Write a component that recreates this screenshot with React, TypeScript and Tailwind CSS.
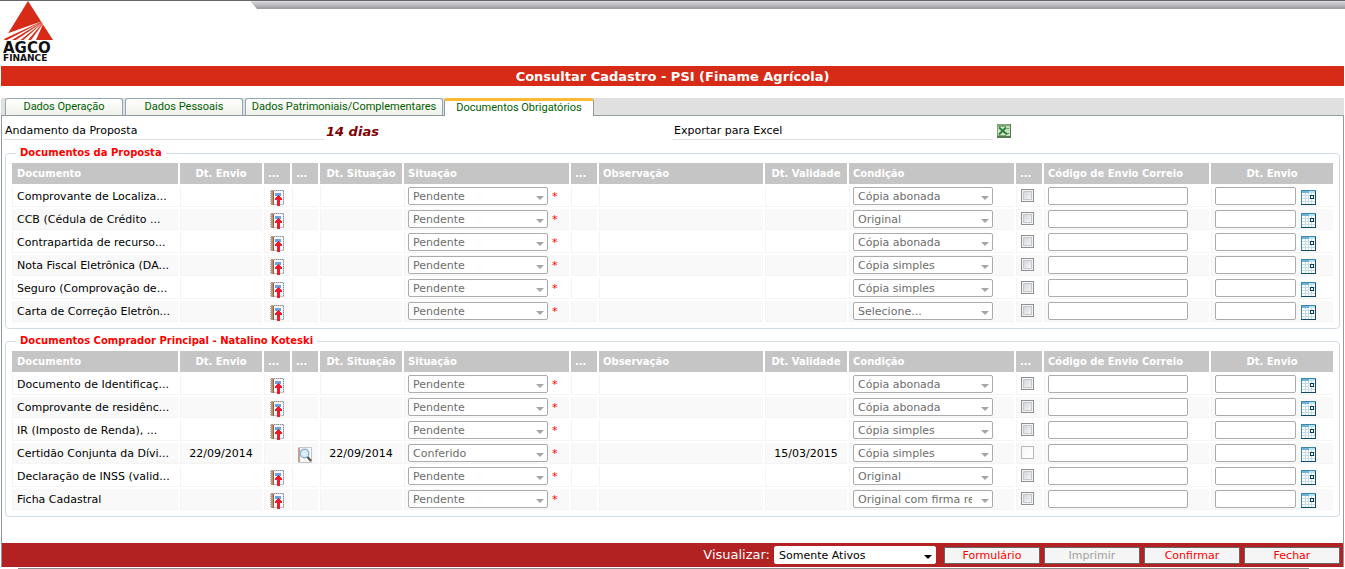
import React from 'react';

type Doc = {
  name: string;
  status: string;
  condition: string;
  sent?: string;
  situated?: string;
  valid?: string;
};

const proposalDocs: Doc[] = [
  { name: 'Comprovante de Localiza...', status: 'Pendente', condition: 'Cópia abonada' },
  { name: 'CCB (Cédula de Crédito ...', status: 'Pendente', condition: 'Original' },
  { name: 'Contrapartida de recurso...', status: 'Pendente', condition: 'Cópia abonada' },
  { name: 'Nota Fiscal Eletrônica (DA...', status: 'Pendente', condition: 'Cópia simples' },
  { name: 'Seguro (Comprovação de...', status: 'Pendente', condition: 'Cópia simples' },
  { name: 'Carta de Correção Eletrôn...', status: 'Pendente', condition: 'Selecione...' },
];

const buyerDocs: Doc[] = [
  { name: 'Documento de Identificaç...', status: 'Pendente', condition: 'Cópia abonada' },
  { name: 'Comprovante de residênc...', status: 'Pendente', condition: 'Cópia abonada' },
  { name: 'IR (Imposto de Renda), ...', status: 'Pendente', condition: 'Cópia simples' },
  {
    name: 'Certidão Conjunta da Dívi...',
    status: 'Conferido',
    condition: 'Cópia simples',
    sent: '22/09/2014',
    situated: '22/09/2014',
    valid: '15/03/2015',
  },
  { name: 'Declaração de INSS (valid...', status: 'Pendente', condition: 'Original' },
  { name: 'Ficha Cadastral', status: 'Pendente', condition: 'Original com firma re' },
];

const columns: { label: string; width: string; align: string }[] = [
  { label: 'Documento', width: 'w-[168px]', align: 'pl-[5px] text-left' },
  { label: 'Dt. Envio', width: 'w-[84px]', align: 'text-center' },
  { label: '...', width: 'w-[28px]', align: 'pl-1 text-left' },
  { label: '...', width: 'w-[28px]', align: 'pl-1 text-left' },
  { label: 'Dt. Situação', width: 'w-[84px]', align: 'text-center' },
  { label: 'Situação', width: 'w-[167px]', align: 'pl-1 text-left' },
  { label: '...', width: 'w-[28px]', align: 'pl-1 text-left' },
  { label: 'Observação', width: 'w-[166px]', align: 'pl-1 text-left' },
  { label: 'Dt. Validade', width: 'w-[84px]', align: 'text-center' },
  { label: 'Condição', width: 'w-[167px]', align: 'pl-1 text-left' },
  { label: '...', width: 'w-[28px]', align: 'pl-1 text-left' },
  { label: 'Código de Envio Correio', width: 'w-[167px]', align: 'pl-1 text-left' },
  { label: 'Dt. Envio', width: 'w-[124px]', align: 'text-center' },
];

function Logo() {
  return (
    <svg width="56" height="64" viewBox="0 0 56 64" role="img" aria-label="AGCO Finance">
      <path d="M28 0 53 39H4Z" fill="#d82b17" />
      <g fill="#fff">
        <path d="M42.500 20 3 34V38L6 37Z" />
        <path d="M42.500 20.500 7 39H12Z" />
        <path d="M43 21 16 39H20.500Z" />
        <path d="M43 21.500 23.500 39H28Z" />
        <path d="M43.500 22 31 39H36Z" />
      </g>
      <text x="3" y="52" fontSize="15" fontWeight="700" fontFamily="DejaVu Sans, sans-serif" fill="#111">
        AGCO
      </text>
      <text x="3" y="60" fontSize="9" fontWeight="700" fontFamily="DejaVu Sans, sans-serif" fill="#111">
        FINANCE
      </text>
    </svg>
  );
}

function UploadIcon() {
  return (
    <svg width="16" height="17" viewBox="0 0 16 17" shapeRendering="crispEdges" aria-hidden="true">
      <path d="M2 .5H14.500V14.500H2Z" fill="#f8f9fd" stroke="#c0c2cc" />
      <path d="M14.500 1V15M3 .5H14" stroke="#8b8e9c" strokeDasharray="1 1" />
      <path d="M2 0H4V15H2Z" fill="#c98a60" />
      <path d="M1 1.500H3M1 3.500H3M1 5.500H3M1 7.500H3M1 9.500H3M1 11.500H3M1 13.500H3" stroke="#aaa" />
      <path d="M4.500 1V15" stroke="#7a655a" />
      <path d="M6 3H12V6H6Z" fill="#6da3e0" />
      <path d="M9 5H10V6H11V7H12V8H13V10H11V16H8V10H6V8H7V7H8V6H9Z" fill="#ec1c28" />
    </svg>
  );
}

function ViewIcon() {
  return (
    <svg width="16" height="16" viewBox="0 0 16 16" aria-hidden="true">
      <path d="M1.500 .5H14.500V15.500H1.500Z" fill="#f7f7fa" stroke="#c4c6ce" />
      <path d="M1 1H3V15H1Z" fill="#c9a08c" />
      <circle cx="7.500" cy="6.500" r="4.300" fill="#d8eefb" stroke="#8db4cf" strokeWidth="1.400" />
      <path d="m10.500 10 3.500 4" stroke="#56524f" strokeWidth="2.200" />
    </svg>
  );
}

function CalendarIcon() {
  return (
    <svg width="15" height="15" viewBox="0 0 15 15" shapeRendering="crispEdges" aria-hidden="true">
      <path d="M0 0H15V15H0Z" fill="#fff" />
      <path d="M4.500 3V14M7.500 3V14M10.500 3V14M1 5.500H14M1 8.500H14M1 11.500H14" stroke="#c5dbe8" />
      <path d="M1 1H8V3H1Z" fill="#6db3da" />
      <path d="M8 1H14V3H8Z" fill="#b5e4f8" />
      <path d="M.5 15V.5H15" fill="none" stroke="#3d86ac" />
      <path d="M14.500 1V14.500H0" fill="none" stroke="#0d4a6c" />
      <path d="M9.500 5.500H12.500V8.500H9.500Z" fill="#fff" stroke="#0b3c5c" />
    </svg>
  );
}

function ExcelIcon() {
  return (
    <svg width="14" height="14" viewBox="0 0 14 14" aria-hidden="true">
      <path d="M0 0H14V14H0Z" fill="#7fa578" />
      <path d="M0 12H14V14H0ZM13 0H14V14H13Z" fill="#557a50" />
      <path d="M1 3H9V11H1Z" fill="#d5e8cf" />
      <path d="M9 2H13V12H9Z" fill="#c5dfbd" />
      <path d="M10 4.500H12M10 9.500H12" stroke="#5c9a58" strokeWidth="1.200" />
      <path d="m2 3.500 8 7M9 3.500l-7 7" stroke="#2f7d38" strokeWidth="2" />
    </svg>
  );
}

function Dropdown({ value, label }: { value: string; label: string }) {
  return (
    <div className="relative h-[18px] w-[140px]">
      <select
        aria-label={label}
        disabled
        className="block h-[18px] w-full appearance-none rounded-xs border border-[#ababab] bg-white pt-px pr-5 pl-1 text-[11px] leading-4 text-[#6d6d6d] opacity-100"
      >
        <option>{value}</option>
      </select>
      <span className="pointer-events-none absolute top-[9px] right-1 border-x-4 border-t-4 border-x-transparent border-t-[#a5a5a5]" />
    </div>
  );
}

function DocTable({ title, docs }: { title: string; docs: Doc[] }) {
  const cell = 'h-[23px] border-r-2 border-b-2 border-white p-0 align-top';
  return (
    <fieldset className="mb-1 min-w-0 rounded border border-[#d3dce5] pr-1 pb-1 pl-[6px]">
      <legend className="ml-1 h-4 px-1 text-[10px] leading-4 font-bold text-[#ff0000]">{title}</legend>
      <table className="mt-[2px] w-full table-fixed border-separate border-spacing-0 text-[11px] leading-4">
        <colgroup>
          {columns.map((c, i) => (
            <col key={i} className={c.width} />
          ))}
        </colgroup>
        <thead>
          <tr>
            {columns.map((c, i) => (
              <th
                key={i}
                className={`h-[23px] border-r-2 border-b-2 border-white bg-[#c5c5c5] p-0 text-[10px] font-bold whitespace-nowrap text-white ${c.align}`}
              >
                {c.label}
              </th>
            ))}
          </tr>
        </thead>
        <tbody>
          {docs.map((d, i) => (
            <tr
              key={i}
              className="odd:bg-white even:bg-[#f9f9f9] [&>td]:shadow-[inset_1px_-1px_0_#f4f4f4]"
            >
              <td className={`${cell} overflow-hidden pt-[3px] pl-[5px] whitespace-nowrap`}>{d.name}</td>
              <td className={`${cell} pt-[3px] text-center`}>{d.sent}</td>
              <td className={`${cell} pt-1 pl-[5px]`}>
                {!d.sent && (
                  <button type="button" aria-label={`Enviar ${d.name}`} className="block">
                    <UploadIcon />
                  </button>
                )}
              </td>
              <td className={`${cell} pt-1 pl-[5px]`}>
                {d.sent && (
                  <button type="button" aria-label={`Ver ${d.name}`} className="block">
                    <ViewIcon />
                  </button>
                )}
              </td>
              <td className={`${cell} pt-[3px] text-center`}>{d.situated}</td>
              <td className={`${cell} pt-px`}>
                <div className="flex items-end gap-1 pl-1">
                  <Dropdown value={d.status} label={`Situação de ${d.name}`} />
                  <span className="text-[#ff0000]">*</span>
                </div>
              </td>
              <td className={cell} />
              <td className={cell} />
              <td className={`${cell} pt-[3px] text-center`}>{d.valid}</td>
              <td className={`${cell} pt-px pl-1`}>
                <Dropdown value={d.condition} label={`Condição de ${d.name}`} />
              </td>
              <td className={`${cell} pt-[3px] pl-[5px]`}>
                <input
                  type="checkbox"
                  aria-label={`Selecionar ${d.name}`}
                  disabled={!!d.sent}
                  className="block size-[13px] appearance-none border border-[#8e8f8f] bg-linear-to-br from-[#c9ccd3] to-white shadow-[inset_0_0_0_1px_#f4f4f4,inset_0_0_0_2px_#c4c7cc] disabled:border-[#b9b9b9] disabled:from-[#f6f6f6] disabled:shadow-none"
                />
              </td>
              <td className={`${cell} pt-px pl-1`}>
                <input
                  type="text"
                  aria-label={`Código de envio de ${d.name}`}
                  className="block h-[18px] w-[140px] rounded-xs border border-[#ababab] bg-white px-1"
                />
              </td>
              <td className={`${cell} pt-px`}>
                <div className="flex items-end gap-[5px] pl-1">
                  <input
                    type="text"
                    aria-label={`Data de envio de ${d.name}`}
                    className="block h-[18px] w-[81px] rounded-xs border border-[#ababab] bg-white px-1"
                  />
                  <button type="button" aria-label="Abrir calendário" className="block">
                    <CalendarIcon />
                  </button>
                </div>
              </td>
            </tr>
          ))}
        </tbody>
      </table>
    </fieldset>
  );
}

const tabs = [
  { label: 'Dados Operação', width: 'w-[118px]' },
  { label: 'Dados Pessoais', width: 'w-[118px]' },
  { label: 'Dados Patrimoniais/Complementares', width: 'w-[198px]' },
];

export default function App() {
  return (
    <div className="bg-white font-['DejaVu_Sans',Verdana,sans-serif] text-[11px] leading-4 text-black">
      <header className="flex h-[66px] items-start border-t border-[#666]">
        <div className="w-[250px] shrink-0">
          <Logo />
        </div>
        <div className="h-2 flex-1 bg-linear-to-b from-[#dcdce0] to-[#9a9a9e] [clip-path:polygon(0_0,100%_0,100%_100%,7px_100%)]" />
      </header>
      <h1 className="mx-px h-5 bg-[#d82b17] text-center text-[13px] leading-[21px] font-bold text-white">
        Consultar Cadastro - PSI (Finame Agrícola)
      </h1>

      <nav
        role="tablist"
        className="mx-px mt-3 flex h-[18px] items-end gap-[2px] border-b border-[#919b9c] bg-[#e0e0e0] pl-1 font-[Roboto,Tahoma,sans-serif] text-[11px] text-[#006000]"
      >
        {tabs.map((t) => (
          <button
            key={t.label}
            type="button"
            role="tab"
            className={`${t.width} h-[17px] rounded-t-[3px] border border-b-0 border-[#91a7b4] bg-linear-to-b from-white to-[#f0f0ea] leading-4 whitespace-nowrap`}
          >
            {t.label}
          </button>
        ))}
        <button
          type="button"
          role="tab"
          aria-selected="true"
          className="-mb-px -ml-px h-[18px] w-[150px] rounded-t-[3px] border border-t-3 border-b-0 border-[#919b9c] border-t-[#fdb933] bg-white pb-[2px] leading-3 whitespace-nowrap"
        >
          Documentos Obrigatórios
        </button>
      </nav>

      <main className="mx-px border-x border-[#919b9c]">
        <div className="flex items-start pt-[7px] pl-[2px]">
          <div className="mr-[2px] h-[17px] w-[320px] border-b border-[#e0e0e0] pl-px">Andamento da Proposta</div>
          <div className="w-[347px] text-[13px] leading-[18px] font-bold text-[#800000] italic">14 dias</div>
          <div className="mr-1 h-[17px] w-[320px] border-b border-[#e0e0e0] pl-px">Exportar para Excel</div>
          <button type="button" aria-label="Exportar para Excel" className="mt-px block">
            <ExcelIcon />
          </button>
        </div>
        <div className="mt-1 px-[3px] pb-[22px]">
          <DocTable title="Documentos da Proposta" docs={proposalDocs} />
          <DocTable title="Documentos Comprador Principal - Natalino Koteski" docs={buyerDocs} />
        </div>
        <footer className="flex h-6 items-center justify-end gap-1 bg-[#b22222] pr-[3px]">
          <label htmlFor="view" className="text-[13px] text-white">
            Visualizar:
          </label>
          <div className="relative mr-1 h-[18px] w-[162px]">
            <select
              id="view"
              className="block h-[18px] w-full appearance-none rounded-xs border border-white bg-white pt-px pr-5 pl-1 text-[11px] leading-4 text-black"
            >
              <option>Somente Ativos</option>
            </select>
            <span className="pointer-events-none absolute top-[9px] right-1 border-x-4 border-t-4 border-x-transparent border-t-black" />
          </div>
          {['Formulário', 'Imprimir', 'Confirmar', 'Fechar'].map((b) => (
            <button
              key={b}
              type="button"
              disabled={b === 'Imprimir'}
              className="h-[17px] w-24 border border-[#666] bg-[#f5f5f5] leading-[15px] text-[#ff0000] disabled:text-[#a0a0a0]"
            >
              {b}
            </button>
          ))}
        </footer>
      </main>
      <div className="mt-px mr-9 ml-[18px] border-b border-[#8c8c8c]" />
    </div>
  );
}
